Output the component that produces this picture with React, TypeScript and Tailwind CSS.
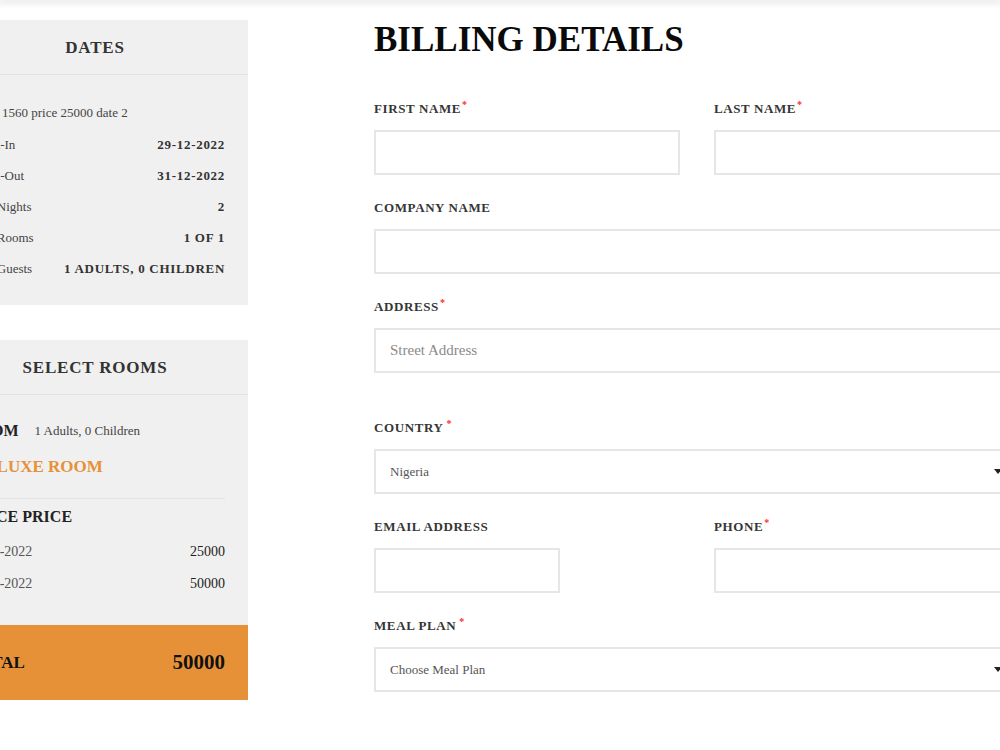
import React from "react";

const Req = ({ gap = false }: { gap?: boolean }) => (
  <span className={`text-[#ff2a2a] text-[10px] relative -top-[5px] ${gap ? "ml-[3px]" : "ml-[1px]"}`}>*</span>
);

const Label = ({ text, req, gap }: { text: string; req?: boolean; gap?: boolean }) => (
  <div className="h-4 leading-[18px] text-[13px] font-bold tracking-[0.6px] text-[#363636] whitespace-nowrap">
    {text}
    {req && <Req gap={gap} />}
  </div>
);

const Input = ({ className = "", placeholder }: { className?: string; placeholder?: string }) => (
  <div className={`h-[45px] border-2 border-[#e6e6e6] bg-white flex items-center pl-[14px] ${className}`}>
    {placeholder && <span className="text-[15px] text-[#8a8a8a]">{placeholder}</span>}
  </div>
);

const Select = ({ value }: { value: string }) => (
  <div className="h-[45px] border-2 border-[#e6e6e6] bg-white flex items-center justify-between pl-[14px] pr-[16px] w-full">
    <span className="text-[13px] text-[#555]">{value}</span>
    <svg width="8" height="5" viewBox="0 0 8 5">
      <polygon points="0,0 8,0 4,5" fill="#222" />
    </svg>
  </div>
);

const InfoRow = ({ label, value }: { label: string; value: string }) => (
  <div className="h-[31px] flex items-center justify-between">
    <span className="text-[13px] text-[#444] whitespace-nowrap">{label}</span>
    <span className="text-[13px] font-bold tracking-[0.7px] text-[#333] whitespace-nowrap">{value}</span>
  </div>
);

export default function App() {
  return (
    <div
      className="w-[1000px] h-[750px] overflow-hidden bg-white relative"
      style={{ fontFamily: '"Liberation Serif", "Times New Roman", serif' }}
    >
      <div className="h-0 relative z-10 shadow-[0_1px_6px_2px_rgba(0,0,0,0.12)]" />
      <div className="flex pt-5 ml-[-58px]">
        {/* Sidebar */}
        <div className="w-[306px] shrink-0 flex flex-col">
          <div className="bg-[#f0f0f0]">
            <div className="h-[55px] flex items-center justify-center border-b border-[#e3e3e3] pt-[2px]">
              <span className="text-[17px] font-bold tracking-[0.8px] text-[#333]">DATES</span>
            </div>
            <div className="pl-[25px] pr-[23px] pt-[21px] pb-[21px]">
              <div className="h-[33px] flex items-center">
                <span className="text-[13px] text-[#444] whitespace-nowrap">Room 1560 price 25000 date 2</span>
              </div>
              <InfoRow label="Check-In" value="29-12-2022" />
              <InfoRow label="Check-Out" value="31-12-2022" />
              <InfoRow label="Total Nights" value="2" />
              <InfoRow label="Total Rooms" value="1 OF 1" />
              <InfoRow label="Total Guests" value="1 ADULTS, 0 CHILDREN" />
            </div>
          </div>

          <div className="bg-[#f0f0f0] mt-[35px]">
            <div className="h-[55px] flex items-center justify-center border-b border-[#e3e3e3] pt-[2px]">
              <span className="text-[17px] font-bold tracking-[0.8px] text-[#333]">SELECT ROOMS</span>
            </div>
            <div className="pl-[25px] pr-[23px] pt-[24px] pb-[26px]">
              <div className="h-6 flex items-center whitespace-nowrap">
                <span className="text-[16px] font-bold text-[#222]">ROOM</span>
                <span className="text-[13px] text-[#444] ml-[16px]">1 Adults, 0 Children</span>
              </div>
              <div className="h-6 mt-3 flex items-center">
                <span className="text-[17px] font-bold text-[#e69138] ml-[6px] whitespace-nowrap">DELUXE ROOM</span>
              </div>
              <div className="mt-[19px] border-t border-[#e4e4e4]" />
              <div className="h-6 mt-[6px] flex items-center">
                <span className="text-[16px] font-bold text-[#222] whitespace-nowrap">SPACE PRICE</span>
              </div>
              <div className="mt-[6px]">
                <div className="h-8 flex items-center justify-between">
                  <span className="text-[14px] text-[#555]">29-12-2022</span>
                  <span className="text-[14px] text-[#222]">25000</span>
                </div>
                <div className="h-8 flex items-center justify-between">
                  <span className="text-[14px] text-[#555]">30-12-2022</span>
                  <span className="text-[14px] text-[#222]">50000</span>
                </div>
              </div>
            </div>
            <div className="h-[75px] bg-[#e69138] pl-[25px] pr-[23px] flex items-center justify-between">
              <span className="text-[17px] font-bold text-[#111]">TOTAL</span>
              <span className="text-[21px] font-bold text-[#111]">50000</span>
            </div>
          </div>
        </div>

        {/* Main form */}
        <div className="ml-[126px] w-[646px] shrink-0 flex flex-col">
          <h1 className="h-10 leading-10 text-[35px] font-bold text-[#0a0a0a] whitespace-nowrap">BILLING DETAILS</h1>

          <div className="mt-10 grid grid-cols-2 gap-x-[34px]">
            <div>
              <Label text="FIRST NAME" req />
              <Input className="mt-[14px]" />
            </div>
            <div>
              <Label text="LAST NAME" req />
              <Input className="mt-[14px]" />
            </div>
          </div>

          <div className="mt-6">
            <Label text="COMPANY NAME" />
            <Input className="mt-[14px]" />
          </div>

          <div className="mt-6">
            <Label text="ADDRESS" req />
            <Input className="mt-[14px]" placeholder="Street Address" />
          </div>

          <div className="mt-[46px]">
            <Label text="COUNTRY" req gap />
            <div className="mt-[14px]">
              <Select value="Nigeria" />
            </div>
          </div>

          <div className="mt-6 grid grid-cols-2 gap-x-[34px]">
            <div>
              <Label text="EMAIL ADDRESS" />
              <Input className="mt-[14px] w-[186px]" />
            </div>
            <div>
              <Label text="PHONE" req />
              <Input className="mt-[14px]" />
            </div>
          </div>

          <div className="mt-6">
            <Label text="MEAL PLAN" req gap />
            <div className="mt-[14px]">
              <Select value="Choose Meal Plan" />
            </div>
          </div>
        </div>
      </div>
    </div>
  );
}
